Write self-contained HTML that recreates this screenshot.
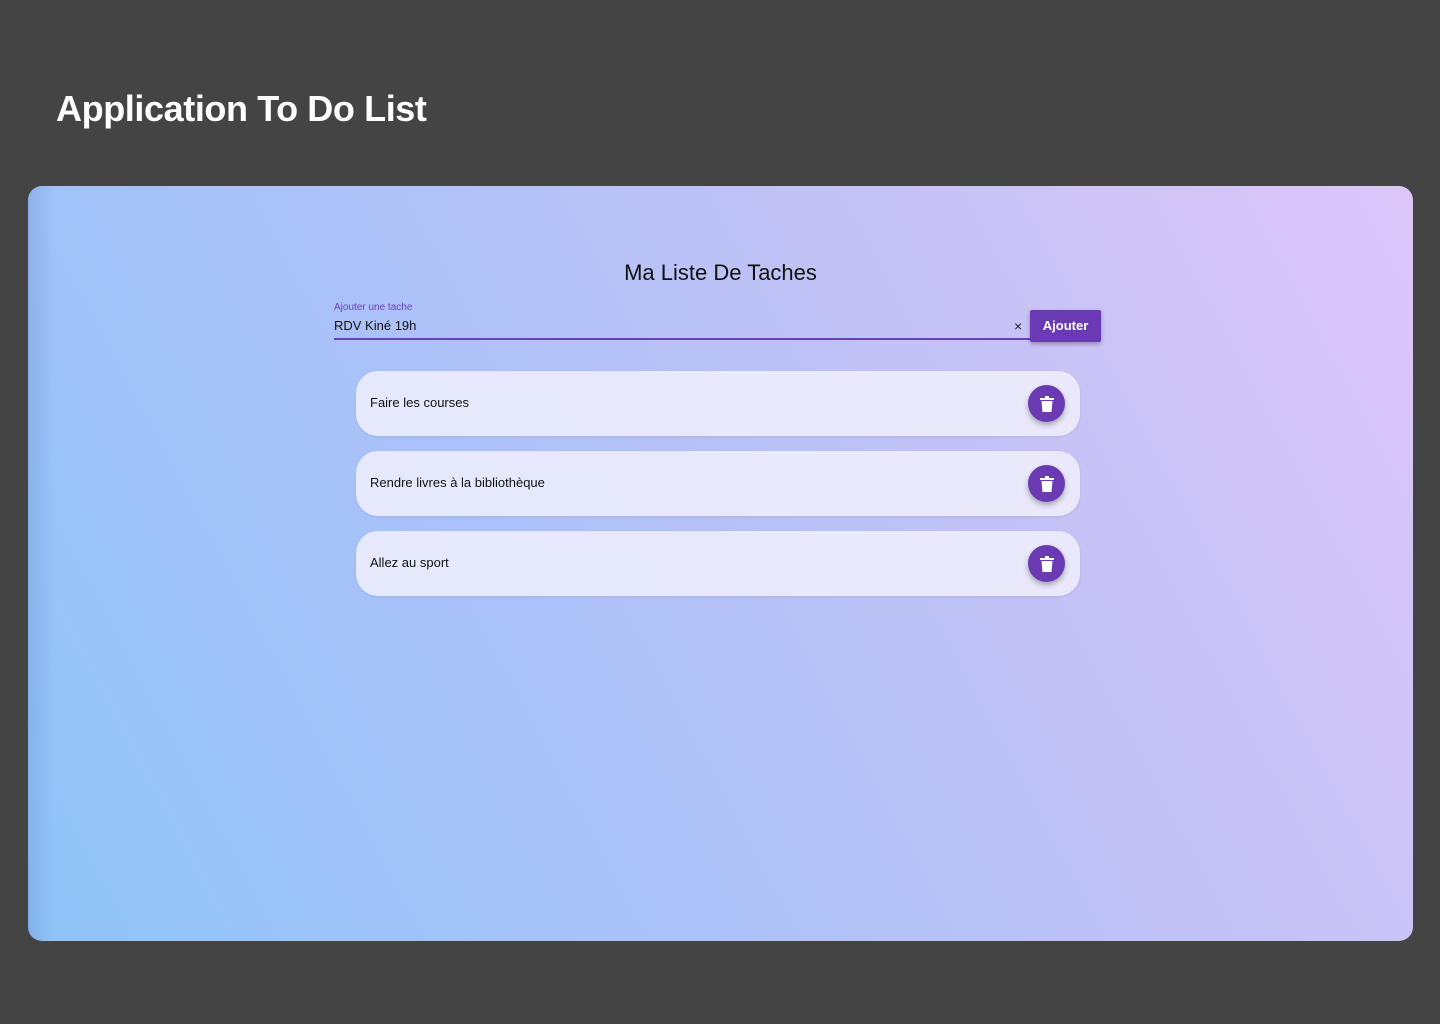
<!DOCTYPE html>
<html><head><meta charset="utf-8"><style>
*{box-sizing:border-box;margin:0;padding:0}
body{width:1440px;height:1024px;background:#444;font-family:"Liberation Sans",sans-serif;position:relative;overflow:hidden}
h1{position:absolute;left:56px;top:88px;color:#fff;font-size:36px;font-weight:bold;letter-spacing:-0.4px}
.panel{position:absolute;left:28px;top:186px;width:1385px;height:755px;border-radius:14px;overflow:hidden;
background:linear-gradient(62deg,#8fc4f8 0%,#abc2f8 38%,#c2c2f6 66%,#dcc6f8 100%)}
.panel:before{content:"";position:absolute;left:0;top:0;bottom:0;width:26px;background:linear-gradient(to right,rgba(90,120,190,.25),rgba(90,120,190,0))}
.title{position:absolute;left:0;right:0;top:74px;text-align:center;font-size:22px;color:#111}
.label{position:absolute;left:306px;top:116px;font-size:10px;color:#6a3fc0}
.val{position:absolute;left:306px;top:132px;font-size:13px;color:#111}
.x{position:absolute;left:986px;top:132px;font-size:14px;color:#222}
.line{position:absolute;left:306px;top:152px;width:697px;height:2px;background:#6b40b8}
.btn{position:absolute;left:1002px;top:124px;width:71px;height:32px;background:#6a3ab4;color:#fff;font-size:13px;font-weight:bold;text-align:center;line-height:32px;border-radius:2px;box-shadow:0 2px 4px rgba(0,0,0,.3)}
.card{position:absolute;left:328px;width:724px;height:65px;border-radius:22px;background:rgba(240,240,252,.85);box-shadow:0 1px 3px rgba(0,0,0,.08)}
.card span{position:absolute;left:14px;top:24px;font-size:13px;color:#111}
.del{position:absolute;left:672px;top:14px;width:37px;height:37px;border-radius:50%;background:#6a3ab4;box-shadow:0 3px 6px rgba(0,0,0,.3);display:flex;align-items:center;justify-content:center}
</style></head><body>
<h1>Application To Do List</h1>
<div class="panel">
<div class="title">Ma Liste De Taches</div>
<div class="label">Ajouter une tache</div>
<div class="val">RDV Kiné 19h</div>
<div class="x">×</div>
<div class="line"></div>
<div class="btn">Ajouter</div>
<div class="card" style="top:185px"><span>Faire les courses</span><div class="del"><svg width="14" height="16" viewBox="0 0 14 16"><rect x="0" y="2" width="14" height="2" fill="#fff"/><rect x="5" y="0" width="4" height="3" fill="#fff"/><path d="M1.5 5h11l-1 11h-9z" fill="#fff"/></svg></div></div>
<div class="card" style="top:265px"><span>Rendre livres à la bibliothèque</span><div class="del"><svg width="14" height="16" viewBox="0 0 14 16"><rect x="0" y="2" width="14" height="2" fill="#fff"/><rect x="5" y="0" width="4" height="3" fill="#fff"/><path d="M1.5 5h11l-1 11h-9z" fill="#fff"/></svg></div></div>
<div class="card" style="top:345px"><span>Allez au sport</span><div class="del"><svg width="14" height="16" viewBox="0 0 14 16"><rect x="0" y="2" width="14" height="2" fill="#fff"/><rect x="5" y="0" width="4" height="3" fill="#fff"/><path d="M1.5 5h11l-1 11h-9z" fill="#fff"/></svg></div></div>
</div>
</body></html>
